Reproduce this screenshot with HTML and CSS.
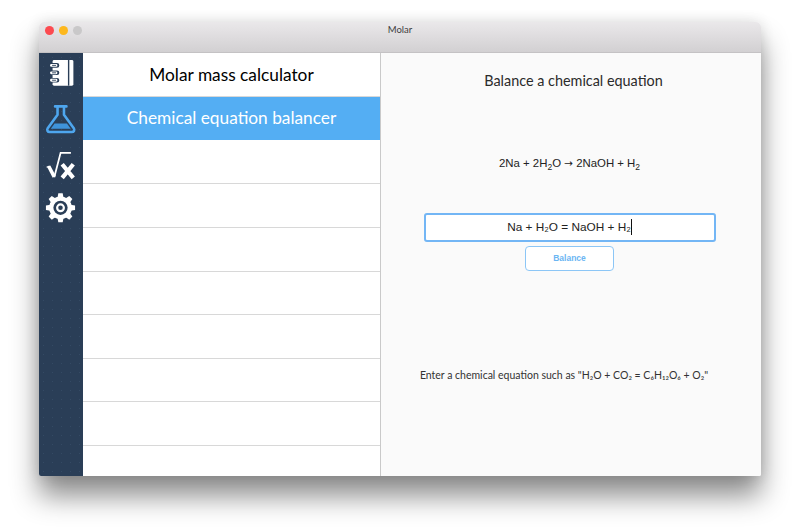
FILE: index.html
```html
<!DOCTYPE html>
<html lang="en">
<head>
<meta charset="utf-8">
<title>Molar</title>
<link rel="stylesheet" href="styles.css">
</head>
<body>
<div class="window">
  <header class="titlebar">
    <div class="lights"><span class="light red"></span><span class="light yellow"></span><span class="light grey"></span></div>
    <div class="title">Molar</div>
  </header>
  <div class="content">
    <nav class="rail">
      <svg class="icon" width="44" height="44" viewBox="0 0 44 44">
        <path fill="#fff" d="M15 7h18a1.500 1.500 0 0 1 1.500 1.500v23a1.500 1.500 0 0 1-1.500 1.500H15a1.500 1.500 0 0 1-1.500-1.500v-23A1.500 1.500 0 0 1 15 7z"/>
        <rect x="29" y="7" width="1.400" height="26" fill="#2a3e57"/>
        <g fill="none" stroke="#2a3e57" stroke-width="4.600" stroke-linecap="round"><path d="M12 12.500h6M12 20h6M12 27.500h6"/></g>
        <g fill="none" stroke="#fff" stroke-width="2.800" stroke-linecap="round"><path d="M12.300 12.500h4.700M12.300 20h4.700M12.300 27.500h4.700"/></g>
        <g fill="none" stroke="#2a3e57" stroke-width=".9"><path d="M13 12.500h4M13 20h4M13 27.500h4"/></g>
      </svg>
      <svg class="icon" width="44" height="44" viewBox="0 0 44 44">
        <path fill="none" stroke="#4ea6ee" stroke-width="2.600" stroke-linejoin="round" stroke-linecap="round" d="M16 9.500h11.500M18.500 9.500V18L8.600 31.500c-1.100 1.900-.2 3.800 2 3.800h22.300c2.200 0 3.100-1.900 2-3.800L25 18V9.500"/>
        <path fill="#3f93da" d="M15.500 26.800h12.500l3.800 5.200H11.700z"/>
      </svg>
      <svg class="icon" width="44" height="44" viewBox="0 0 44 44">
        <path fill="none" stroke="#fff" stroke-width="1.300" d="M7.500 25.500l3-1.300"/>
        <path fill="none" stroke="#fff" stroke-width="3.600" d="M9.600 24.500l5.600 10.700"/>
        <path fill="none" stroke="#fff" stroke-width="1.800" d="M15.200 35.500L21.600 11H32"/>
        <path fill="none" stroke="#fff" stroke-width="4.200" d="M23.200 22.500l11.200 13.700M34.400 22.500L23.200 36.200"/>
      </svg>
      <svg class="icon" width="44" height="44" viewBox="0 0 44 44">
        <g fill="#fff">
          <circle cx="21.500" cy="22" r="11.500"/>
          <path d="M18.400 12L19.300 7.300h4.400L24.600 12z"/>
          <path d="M18.400 12L19.300 7.300h4.400L24.600 12z" transform="rotate(45 21.500 22)"/>
          <path d="M18.400 12L19.300 7.300h4.400L24.600 12z" transform="rotate(90 21.500 22)"/>
          <path d="M18.400 12L19.300 7.300h4.400L24.600 12z" transform="rotate(135 21.500 22)"/>
          <path d="M18.400 12L19.300 7.300h4.400L24.600 12z" transform="rotate(180 21.500 22)"/>
          <path d="M18.400 12L19.300 7.300h4.400L24.600 12z" transform="rotate(225 21.500 22)"/>
          <path d="M18.400 12L19.300 7.300h4.400L24.600 12z" transform="rotate(270 21.500 22)"/>
          <path d="M18.400 12L19.300 7.300h4.400L24.600 12z" transform="rotate(315 21.500 22)"/>
        </g>
        <circle cx="21.500" cy="22" r="7.200" fill="#2a3e57"/>
        <circle cx="21.500" cy="22" r="3.400" fill="none" stroke="#fff" stroke-width="2.200"/>
      </svg>
    </nav>
    <section class="list">
      <div class="row">Molar mass calculator</div>
      <div class="row selected">Chemical equation balancer</div>
      <div class="row"></div>
      <div class="row"></div>
      <div class="row"></div>
      <div class="row"></div>
      <div class="row"></div>
      <div class="row"></div>
      <div class="row"></div>
      <div class="row"></div>
    </section>
    <main class="detail">
      <h1 class="heading">Balance a chemical equation</h1>
      <p class="result">2Na + 2H<sub>2</sub>O <span class="arrow">→</span> 2NaOH + H<sub>2</sub></p>
      <div class="field">Na + H₂O = NaOH + H₂<span class="caret"></span></div>
      <button class="balance" type="button">Balance</button>
      <p class="hint">Enter a chemical equation such as "H₂O + CO₂ = C₆H₁₂O₆ + O₂"</p>
    </main>
  </div>
</div>
</body>
</html>
```

FILE: styles.css
```css
* { box-sizing: border-box; }
html, body { margin: 0; height: 100%; overflow: hidden; background: #fff; }
body { padding: 22px 39px 0; font-family: "Lato", "Liberation Sans", sans-serif; }

.window {
  width: 722px;
  height: 454px;
  display: flex;
  flex-direction: column;
  border-radius: 5px 5px 2px 2px;
  overflow: hidden;
  box-shadow: 0 20px 28px rgba(0, 0, 0, .45), 0 0 14px rgba(0, 0, 0, .12);
}

.titlebar {
  height: 31px;
  flex: none;
  position: relative;
  display: flex;
  justify-content: center;
  background: linear-gradient(#eae8ea, #d2d0d2);
  border-bottom: 1px solid #c4c2c4;
}
.lights { position: absolute; left: 6px; top: 4px; display: flex; gap: 5px; }
.light { width: 9px; height: 9px; border-radius: 50%; }
.red { background: #fc4a50; }
.yellow { background: #fdb81e; }
.grey { background: #c9c8c9; }
.title { font-size: 9.500px; line-height: 12px; margin-top: 2px; color: #3e3e3e; }

.content { flex: 1; min-height: 0; display: flex; }

.rail {
  width: 44px;
  flex: none;
  background-color: #2a3e57;
  background-image: radial-gradient(circle, rgba(120, 150, 180, .14) .6px, transparent .9px);
  background-size: 9px 9px;
  display: flex;
  flex-direction: column;
  gap: .8px;
  overflow: hidden;
}
.icon { display: block; flex: none; height: 43.600px; }

.list {
  width: 298px;
  flex: none;
  background: #fff;
  border-right: 1px solid #c9c9c9;
  overflow: hidden;
}
.row {
  height: 43.600px;
  display: flex;
  align-items: center;
  justify-content: center;
  font-size: 17.300px;
  color: #000;
  border-bottom: 1px solid #d8d8d8;
}
.selected { background: #54aef3; color: #fff; border-bottom-color: #54aef3; margin-bottom: .7px; }

.detail {
  flex: 1;
  min-width: 0;
  background: #fafafa;
  display: flex;
  flex-direction: column;
  align-items: center;
  padding-right: 3px;
}
.heading { margin: 19px 0 0 8px; font-size: 14.400px; line-height: 18px; font-weight: 400; color: #2b2b2b; }
.result {
  margin: 64px 0 0;
  font-family: "Liberation Sans", sans-serif;
  font-size: 11.400px;
  line-height: 18px;
  color: #222;
}
.result sub { font-size: 8.500px; line-height: 0; }
.arrow { font-family: "DejaVu Sans", sans-serif; font-size: 10.500px; }
.field {
  margin-top: 41px;
  width: 292px;
  height: 29px;
  padding-bottom: 2px;
  display: flex;
  align-items: center;
  justify-content: center;
  background: #fff;
  border: 2px solid #73b6f5;
  border-radius: 3px;
  font-family: "Liberation Sans", "DejaVu Sans", sans-serif;
  font-size: 11.800px;
  color: #222;
}
.caret { width: 1px; height: 16px; background: #111; }
.balance {
  margin-top: 4px;
  width: 89px;
  height: 25px;
  padding: 0 0 2px;
  background: #fff;
  border: 1px solid #8cc6f6;
  border-radius: 4px;
  font-family: "Liberation Sans", sans-serif;
  font-size: 8.500px;
  font-weight: 700;
  color: #6bb6f3;
}
.hint { margin: 97px 11px 0 0; font-size: 10.500px; line-height: 14px; color: #333; }
```
